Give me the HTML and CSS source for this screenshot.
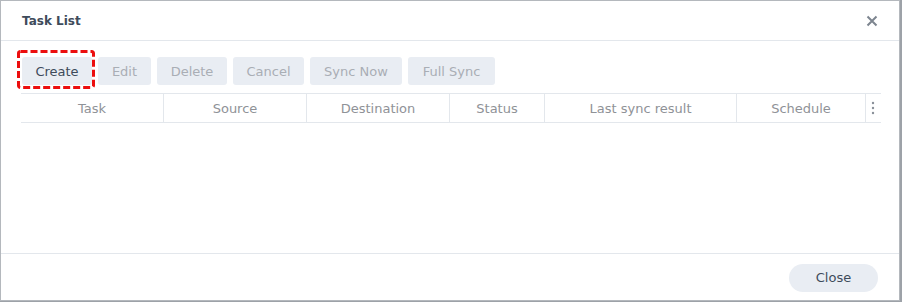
FILE: index.html
```html
<!DOCTYPE html>
<html lang="en">
<head>
  <meta charset="UTF-8">
  <title>Task List</title>
  <link rel="stylesheet" href="styles.css">
</head>
<body>

  <div class="dialog">
    <div class="dialog-header">
      <span class="dialog-title">Task List</span>
      <span class="close-x">
        <svg width="12" height="12" viewBox="0 0 12 12"><path d="M1.5 1.5 L10.5 10.5 M10.5 1.5 L1.5 10.5" stroke="#7d858f" stroke-width="2" fill="none"/></svg>
      </span>
    </div>

    <div class="dialog-body">
      <div class="toolbar">
        <button class="btn btn-active">Create
          <svg class="mark" width="78" height="39" viewBox="0 0 78 39"><rect x="1.5" y="1.5" width="75" height="36" rx="2" fill="none" stroke="#ec0e0e" stroke-width="3" stroke-dasharray="7 3"/></svg>
        </button>
        <button class="btn" disabled>Edit</button>
        <button class="btn" disabled>Delete</button>
        <button class="btn" disabled>Cancel</button>
        <button class="btn" disabled>Sync Now</button>
        <button class="btn" disabled>Full Sync</button>
      </div>

      <div class="grid-head">
        <div class="col col-task">Task</div>
        <div class="col col-source">Source</div>
        <div class="col col-dest">Destination</div>
        <div class="col col-status">Status</div>
        <div class="col col-result">Last sync result</div>
        <div class="col col-sched">Schedule</div>
        <div class="col col-more">
          <svg width="4" height="14" viewBox="0 0 4 14"><circle cx="2" cy="2" r="1.2" fill="#8a9099"/><circle cx="2" cy="7" r="1.2" fill="#8a9099"/><circle cx="2" cy="12" r="1.2" fill="#8a9099"/></svg>
        </div>
      </div>
    </div>

    <div class="dialog-footer">
      <button class="btn-close">Close</button>
    </div>
  </div>

</body>
</html>
```

FILE: styles.css
```css
body {
  margin: 0;
  background-color: #9da2a8;
  font-family: "DejaVu Sans", Verdana, sans-serif;
  width: 902px;
  height: 302px;
  overflow: hidden;
}

.dialog {
  width: 898px;
  height: 299px;
  background: #fff;
  border: 1px solid #b4b8bd;
  display: flex;
  flex-direction: column;
}

.dialog-header {
  height: 39px;
  border-bottom: 1px solid #e3e7ec;
  display: flex;
  align-items: center;
  justify-content: space-between;
  padding: 0 21px 0 21px;
}
.dialog-title {
  font-size: 12px;
  font-weight: bold;
  color: #3e4b5b;
}
.close-x {
  display: flex;
}

.dialog-body {
  flex: 1;
  padding: 16px 18px 0 20px;
}

.toolbar {
  display: flex;
  gap: 6px;
  padding-left: 1px;
}
.btn {
  position: relative;
  height: 28px;
  padding: 0;
  border: none;
  border-radius: 3px;
  background-color: #e9edf3;
  color: #a9aeb5;
  font-family: "DejaVu Sans", Verdana, sans-serif;
  font-size: 13px;
}
.btn-active {
  width: 70px;
  color: #3e4b5b;
}
.btn:nth-child(2) { width: 53px; }
.btn:nth-child(3) { width: 70px; }
.btn:nth-child(4) { width: 71px; }
.btn:nth-child(5) { width: 92px; }
.btn:nth-child(6) { width: 87px; }

/* highlight around the Create button */
.mark {
  position: absolute;
  left: -5px;
  top: -7px;
}

.grid-head {
  margin-top: 8px;
  width: 860px;
  height: 28px;
  border-top: 1px solid #e3e7ec;
  border-bottom: 1px solid #e3e7ec;
  display: flex;
}
.col {
  box-sizing: border-box;
  flex: none;
  display: flex;
  align-items: center;
  justify-content: center;
  font-size: 13px;
  color: #8f9297;
  border-left: 1px solid #e3e7ec;
}
.col-task { width: 142px; border-left: none; }
.col-source { width: 143px; }
.col-dest { width: 143px; }
.col-status { width: 95px; }
.col-result { width: 192px; }
.col-sched { width: 129px; }
.col-more { width: 16px; justify-content: flex-start; padding-left: 5px; }

.dialog-footer {
  height: 46px;
  border-top: 1px solid #e3e7ec;
  display: flex;
  align-items: center;
  justify-content: flex-end;
  padding-right: 21px;
}
.btn-close {
  width: 89px;
  height: 28px;
  margin-top: 1px;
  border: none;
  border-radius: 14px;
  background-color: #e9edf3;
  color: #3e4b5b;
  font-family: "DejaVu Sans", Verdana, sans-serif;
  font-size: 13px;
}
```
